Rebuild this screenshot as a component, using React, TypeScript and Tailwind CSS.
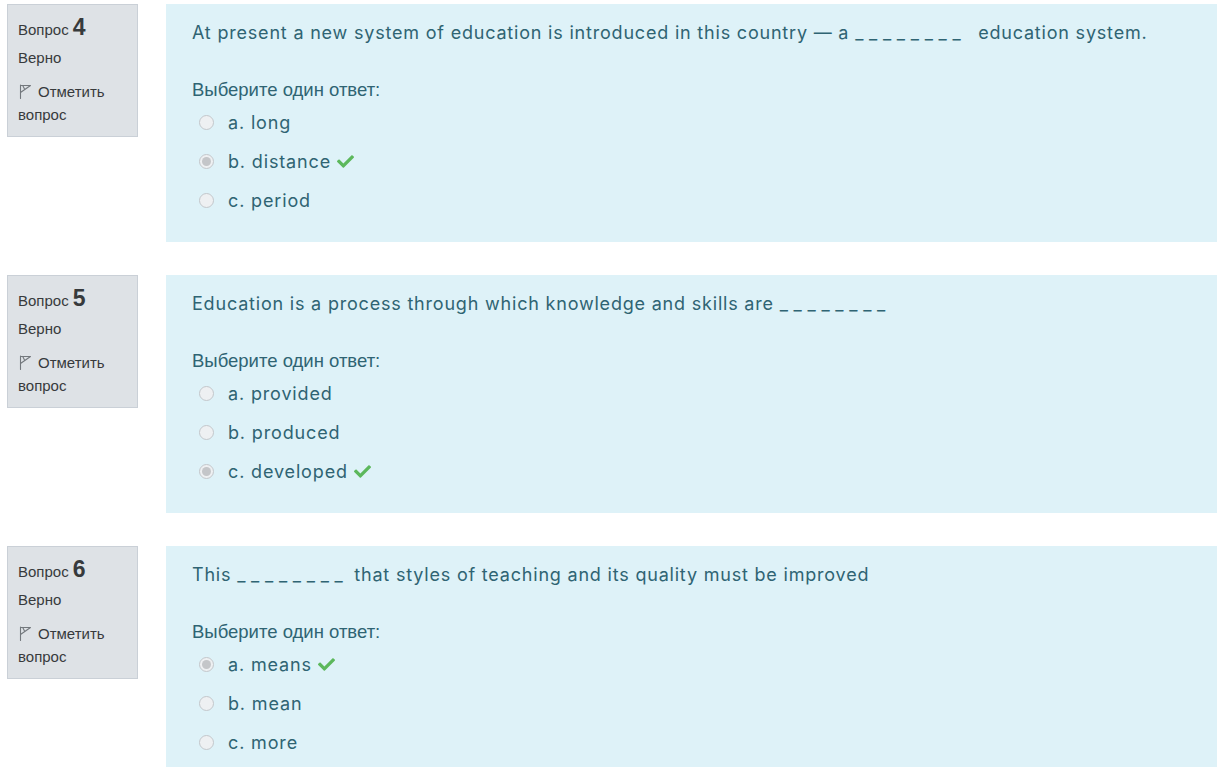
import { FaCheck } from 'react-icons/fa';

type Option = { label: string; checked?: boolean };
type Question = { num: number; before: string; after: string; options: Option[] };

const questions: Question[] = [
    {
        num: 4,
        before: 'At present a new system of education is introduced in this country — a ',
        after: '  education system.',
        options: [{ label: 'a. long' }, { label: 'b. distance', checked: true }, { label: 'c. period' }],
    },
    {
        num: 5,
        before: 'Education is a process through which knowledge and skills are ',
        after: '',
        options: [{ label: 'a. provided' }, { label: 'b. produced' }, { label: 'c. developed', checked: true }],
    },
    {
        num: 6,
        before: 'This ',
        after: ' that styles of teaching and its quality must be improved',
        options: [{ label: 'a. means', checked: true }, { label: 'b. mean' }, { label: 'c. more' }],
    },
];

function Flag() {
    return (
        <svg width="14" height="15" viewBox="0 0 14 15" className="mr-[6px] inline-block align-[-2px]">
            <path
                d="M2.5 1 L2.5 14.5 M2.5 1.5 L12.5 1.5 L2.5 8.5 M5 2 L6.5 5"
                fill="none"
                stroke="#73787d"
                strokeWidth="1.1"
                strokeLinejoin="round"
                strokeLinecap="round"
            />
        </svg>
    );
}

function Radio({ checked }: { checked?: boolean }) {
    return (
        <span className="w-[15px] h-[15px] rounded-full border border-[#c3c7cb] bg-[#eef0f2] flex items-center justify-center">
            {checked && <span className="w-[9px] h-[9px] rounded-full bg-[#c4c6c9]" />}
        </span>
    );
}

function QuestionBlock({ q }: { q: Question }) {
    return (
        <div className="flex items-start">
            {/* Info */}
            <div className="ml-[7px] w-[131px] shrink-0 bg-[#dee2e6] border border-[#cad0d7] px-[10px] pt-[5px] pb-[10px] text-[#373a3c] text-[15px] font-['Liberation_Sans',Arial,sans-serif]">
                <div className="flex items-baseline h-[24px]">
                    <span>Вопрос</span>
                    <span className="ml-[4px] text-[23px] font-bold text-[#373a3c]">{q.num}</span>
                </div>
                <div className="mt-[14px] leading-[20px]">Верно</div>
                <div className="mt-[12px] leading-[23px]">
                    <Flag />
                    Отметить
                    <br />
                    вопрос
                </div>
            </div>
            {/* Content */}
            <div className="ml-[28px] flex-1 bg-[#def2f8] pl-[26px] pt-[15px] pb-[22px] text-[#2f6473]">
                <div className="text-[18px] leading-[28px] tracking-[0.8px] font-['Inter',sans-serif] whitespace-pre">
                    {q.before}
                    <span className="tracking-[5.7px]">________</span>
                    {q.after}
                </div>
                <div className="mt-[32px] text-[18.5px] leading-[22px] font-['Liberation_Sans',Arial,sans-serif]">
                    Выберите один ответ:
                </div>
                <div className="mt-[2px] flex flex-col">
                    {q.options.map((o) => (
                        <div key={o.label} className="flex items-center h-[39px] pl-[7px]">
                            <Radio checked={o.checked} />
                            <span className="ml-[14px] text-[18px] tracking-[0.85px] font-['Inter',sans-serif]">{o.label}</span>
                            {o.checked && <FaCheck className="ml-[6px] text-[#5cb85c] text-[17px]" />}
                        </div>
                    ))}
                </div>
            </div>
        </div>
    );
}

export default function App() {
    return (
        <div className="w-[1217px] h-[767px] overflow-hidden bg-white pt-[4px] flex flex-col gap-[33px]">
            {questions.map((q) => (
                <QuestionBlock key={q.num} q={q} />
            ))}
        </div>
    );
}
